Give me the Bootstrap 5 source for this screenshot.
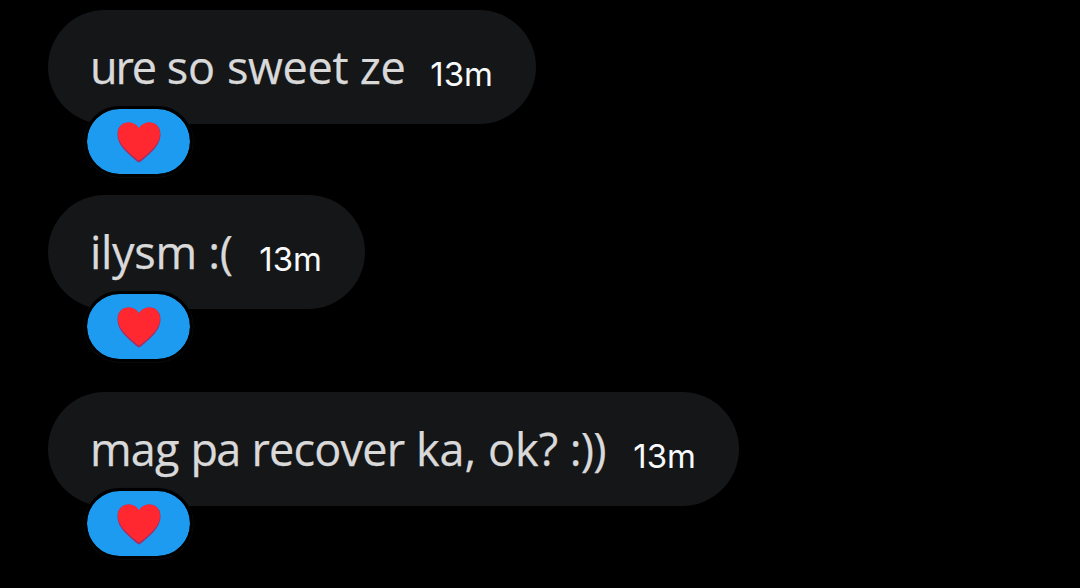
<!DOCTYPE html>
<html lang="tl">
<head>
<meta charset="utf-8">
<meta name="viewport" content="width=device-width, initial-scale=1">
<title>Messages</title>
<link href="https://cdn.jsdelivr.net/npm/bootstrap@5.3.0/dist/css/bootstrap.min.css" rel="stylesheet">
<style>
  body { background: #000; font-family: "Open Sans", "Noto Sans", sans-serif; }
  .thread { min-height: 100vh; padding: 10px 48px 0; }
  .bubble { height: 114px; border-radius: 57px; background: #151618; padding: 0 43px 0 42px; white-space: nowrap; }
  .said { font-size: 45px; line-height: 60px; color: #d9d9da; padding-top: 27px; -webkit-text-stroke: .25px #d9d9da; }
  .ago { font-family: Inter, sans-serif; font-size: 33px; line-height: 40px; color: #f7f9fa; padding-top: 44px; }
  .reaction { left: 36px; top: 96px; width: 109px; height: 71px; border: 3px solid #000; background: #1d9bf0; background-clip: padding-box; box-shadow: 0 0 0 .5px #101214; }
  .b1 { width: 488px; margin-bottom: 71px; }
  .b2 { width: 317px; margin-bottom: 83px; }
  .b3 { width: 691px; }
  .k1 { letter-spacing: -.3px; }
  .k2 { letter-spacing: -.8px; }
  .k3 { letter-spacing: -1.6px; }
  .k4 { letter-spacing: -2.1px; }
</style>
</head>
<body>
<svg class="d-none" xmlns="http://www.w3.org/2000/svg">
  <symbol id="heart" viewBox="0 0 44 42">
    <path fill="#a02f68" d="M22 41.500C20 40.700 14 35.500 8.500 30C3 24.500 .5 19 .5 13C.5 6 5 1.500 11.500 1.500C16.200 1.500 20 4 22 7.500C24 4 27.800 1.500 32.500 1.500C39 1.500 43.500 6 43.500 13C43.500 19 41 24.500 35.500 30C30 35.500 24 40.700 22 41.500Z"/>
    <path fill="#ff2830" d="M22 39.500C20 38.700 14.500 34 9 28.500C3.500 23 1 18 1 12.500C1 6 5.500 1.500 11.500 1.500C16.500 1.500 20.200 4 22 7.500C23.800 4 27.500 1.500 32.500 1.500C38.500 1.500 43 6 43 12.500C43 18 40.500 23 35 28.500C29.500 34 24 38.700 22 39.500Z"/>
  </symbol>
</svg>
<main class="thread d-flex flex-column align-items-start">
  <div class="bubble b1 position-relative d-flex justify-content-between">
    <div class="said"><span class="k4">ure</span> so <span class="k1">sweet ze</span></div>
    <div class="ago">13m</div>
    <div class="reaction position-absolute rounded-pill d-flex align-items-center justify-content-center"><svg width="44" height="42"><use href="#heart"/></svg></div>
  </div>
  <div class="bubble b2 position-relative d-flex justify-content-between">
    <div class="said"><span class="k1">ilysm :(</span></div>
    <div class="ago">13m</div>
    <div class="reaction position-absolute rounded-pill d-flex align-items-center justify-content-center"><svg width="44" height="42"><use href="#heart"/></svg></div>
  </div>
  <div class="bubble b3 position-relative d-flex justify-content-between">
    <div class="said"><span class="k2">mag</span> <span class="k3">pa</span> <span class="k2">recover</span> ka, ok? <span class="k2">:))</span></div>
    <div class="ago">13m</div>
    <div class="reaction position-absolute rounded-pill d-flex align-items-center justify-content-center"><svg width="44" height="42"><use href="#heart"/></svg></div>
  </div>
</main>
<script src="https://cdn.jsdelivr.net/npm/bootstrap@5.3.0/dist/js/bootstrap.bundle.min.js"></script>
</body>
</html>
